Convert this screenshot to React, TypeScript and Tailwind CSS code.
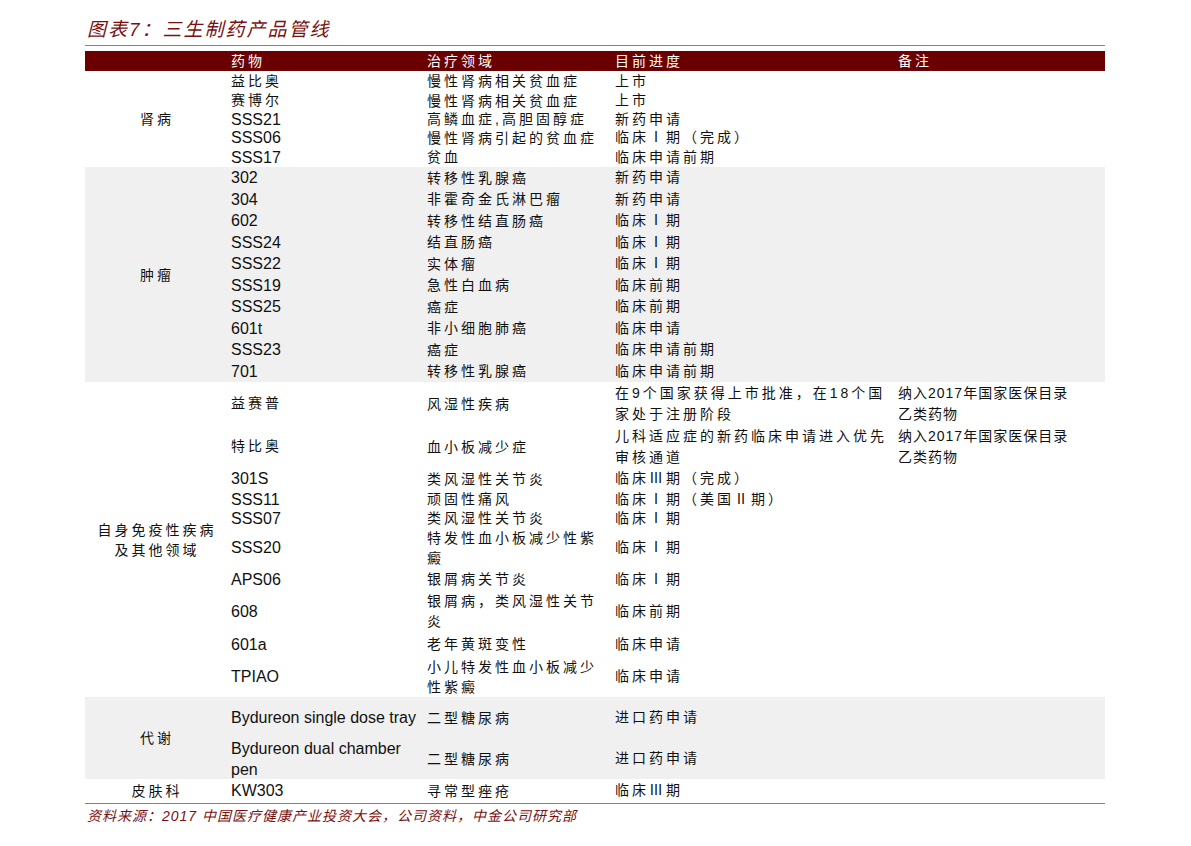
const F = { fontFamily: '"Liberation Sans", "Noto Sans CJK SC", sans-serif' };

type Row = [string, string, string, string[], number];

const NOTE = ["纳入2017年国家医保目录", "乙类药物"];

const groups: { name: string[]; bg: string; rows: Row[] }[] = [
  {
    name: ["肾病"],
    bg: "bg-white",
    rows: [
      ["益比奥", "慢性肾病相关贫血症", "上市", [], 20],
      ["赛博尔", "慢性肾病相关贫血症", "上市", [], 19],
      ["SSS21", "高鳞血症,高胆固醇症", "新药申请", [], 18],
      ["SSS06", "慢性肾病引起的贫血症", "临床Ⅰ期（完成）", [], 19],
      ["SSS17", "贫血", "临床申请前期", [], 20],
    ],
  },
  {
    name: ["肿瘤"],
    bg: "bg-[#f0f0f0]",
    rows: [
      ["302", "转移性乳腺癌", "新药申请", [], 21],
      ["304", "非霍奇金氏淋巴瘤", "新药申请", [], 22],
      ["602", "转移性结直肠癌", "临床Ⅰ期", [], 21],
      ["SSS24", "结直肠癌", "临床Ⅰ期", [], 22],
      ["SSS22", "实体瘤", "临床Ⅰ期", [], 21],
      ["SSS19", "急性白血病", "临床前期", [], 22],
      ["SSS25", "癌症", "临床前期", [], 21],
      ["601t", "非小细胞肺癌", "临床申请", [], 22],
      ["SSS23", "癌症", "临床申请前期", [], 21],
      ["701", "转移性乳腺癌", "临床申请前期", [], 22],
    ],
  },
  {
    name: ["自身免疫性疾病", "及其他领域"],
    bg: "bg-white",
    rows: [
      ["益赛普", "风湿性疾病", "在9个国家获得上市批准，在18个国家处于注册阶段", NOTE, 43],
      ["特比奥", "血小板减少症", "儿科适应症的新药临床申请进入优先审核通道", NOTE, 43],
      ["301S", "类风湿性关节炎", "临床Ⅲ期（完成）", [], 21],
      ["SSS11", "顽固性痛风", "临床Ⅰ期（美国Ⅱ期）", [], 20],
      ["SSS07", "类风湿性关节炎", "临床Ⅰ期", [], 18],
      ["SSS20", "特发性血小板减少性紫癜", "临床Ⅰ期", [], 41],
      ["APS06", "银屑病关节炎", "临床Ⅰ期", [], 22],
      ["608", "银屑病，类风湿性关节炎", "临床前期", [], 42],
      ["601a", "老年黄斑变性", "临床申请", [], 24],
      ["TPIAO", "小儿特发性血小板减少性紫癜", "临床申请", [], 41],
    ],
  },
  {
    name: ["代谢"],
    bg: "bg-[#f0f0f0]",
    rows: [
      ["Bydureon single dose tray", "二型糖尿病", "进口药申请", [], 41],
      ["Bydureon dual chamber pen", "二型糖尿病", "进口药申请", [], 41],
    ],
  },
  {
    name: ["皮肤科"],
    bg: "bg-white",
    rows: [["KW303", "寻常型痤疮", "临床Ⅲ期", [], 23]],
  },
];

const cjk = "tracking-[3px]";
const isCjk = (s: string) => /[\u4e00-\u9fff]/.test(s);

export default function App() {
  return (
    <div className="w-[1191px] h-[846px] bg-white text-[#111] text-[15px]" style={F}>
      <div className="ml-[85px] w-[1020px] pt-[17px]">
        <div className="text-[19px] italic text-[#7a1010] tracking-[2px] leading-[26px] pl-[2px]">图表7：三生制药产品管线</div>
        <div className="h-[1px] bg-[#b07070] mt-[2px]" />
        <div className="mt-[5px] h-[20px] bg-[#6b0000] text-white flex items-center text-[14px] leading-[20px]">
          <div className="w-[144px]" />
          <div className={`w-[196px] pl-[2px] ${cjk}`}>药物</div>
          <div className={`w-[188px] pl-[2px] ${cjk}`}>治疗领域</div>
          <div className={`w-[283px] pl-[2px] ${cjk}`}>目前进度</div>
          <div className={`pl-[2px] ${cjk}`}>备注</div>
        </div>
        {groups.map((g, gi) => (
          <div key={gi} className={`flex ${g.bg}`}>
            <div className={`w-[144px] flex flex-col items-center justify-center text-[14px] leading-[20px] ${cjk}`}>
              {g.name.map((n) => (
                <div key={n}>{n}</div>
              ))}
            </div>
            <div className="flex flex-col">
              {g.rows.map((r, ri) => (
                <div key={ri} className="flex items-center" style={{ height: r[4] }}>
                  <div className={`w-[196px] pl-[2px] leading-[21px] ${isCjk(r[0]) ? "text-[14px] " + cjk : "text-[16px]"}`}>{r[0]}</div>
                  <div className={`w-[188px] pl-[2px] text-[14px] leading-[20px] ${cjk}`}>{r[1]}</div>
                  <div className={`w-[283px] pl-[2px] text-[14px] leading-[21px] ${cjk}`}>{r[2]}</div>
                  <div className="w-[206px] pl-[2px] text-[14px] leading-[21px] tracking-[1px]">
                    {r[3].map((l) => (
                      <div key={l}>{l}</div>
                    ))}
                  </div>
                </div>
              ))}
            </div>
          </div>
        ))}
        <div className="h-[1px] bg-[#b07070] mt-[1px]" />
        <div className="text-[14px] italic text-[#7a1010] tracking-[1px] leading-[24px] pl-[2px]">
          资料来源：2017 中国医疗健康产业投资大会，公司资料，中金公司研究部
        </div>
      </div>
    </div>
  );
}
